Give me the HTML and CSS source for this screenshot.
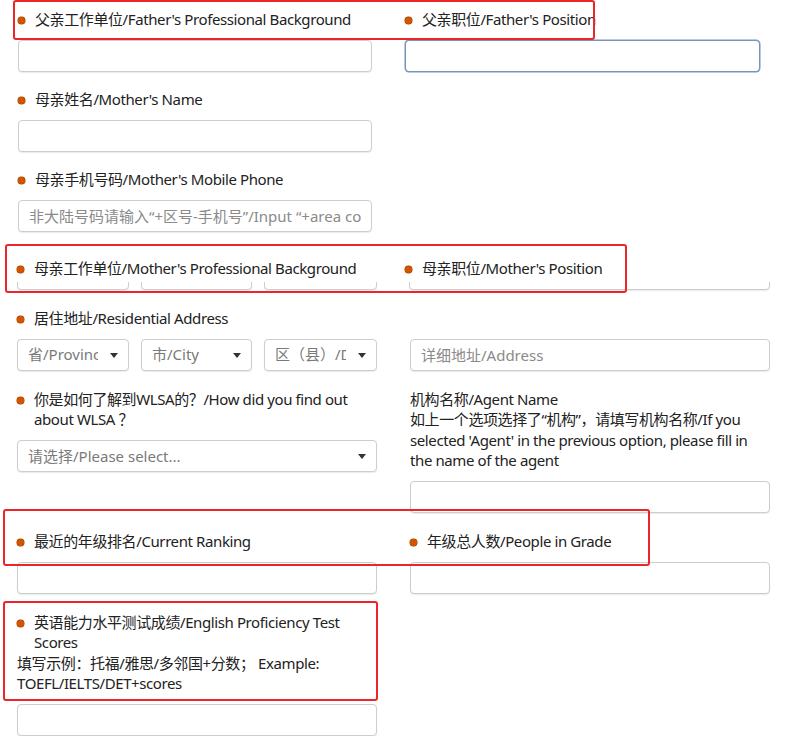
FILE: index.html
```html
<!DOCTYPE html>
<html lang="zh-CN">
<head>
    <meta charset="UTF-8">
    <meta name="viewport" content="width=device-width, initial-scale=1.0">
    <title>家庭信息 / Family Information</title>
    <link rel="stylesheet" href="styles.css">
</head>
<body>

    <form class="apply-form">

        <!-- Pais: trabalho, nome e telefone -->
        <div class="section upper">
            <div class="row">
                <span class="callout callout-father"></span>
                <div class="field">
                    <label class="req">父亲工作单位/Father's Professional Background</label>
                    <input type="text" class="text">
                </div>
                <div class="field">
                    <label class="req">父亲职位/Father's Position</label>
                    <input type="text" class="text focused">
                </div>
            </div>
            <div class="row">
                <div class="field">
                    <label class="req">母亲姓名/Mother's Name</label>
                    <input type="text" class="text">
                </div>
            </div>
            <div class="row">
                <div class="field">
                    <label class="req">母亲手机号码/Mother's Mobile Phone</label>
                    <input type="text" class="text" placeholder="非大陆号码请输入“+区号-手机号”/Input “+area code-mobile number”">
                </div>
            </div>
        </div>

        <!-- Linha colada por cima dos campos -->
        <div class="pasted">
            <span class="callout callout-mother"></span>
            <div class="strip">
                <label class="req">母亲工作单位/Mother's Professional Background</label>
                <label class="req">母亲职位/Mother's Position</label>
            </div>
            <div class="strip-fields">
                <div class="selects">
                    <span class="box"></span>
                    <span class="box"></span>
                    <span class="box"></span>
                </div>
                <span class="box"></span>
            </div>
        </div>

        <div class="section lower">
            <div class="row">
                <div class="field">
                    <label class="req">居住地址/Residential Address</label>
                    <div class="selects">
                        <div class="select"><select><option>省/Province</option></select></div>
                        <div class="select"><select><option>市/City</option></select></div>
                        <div class="select"><select><option>区（县）/District</option></select></div>
                    </div>
                </div>
                <div class="field bare">
                    <input type="text" class="text" placeholder="详细地址/Address">
                </div>
            </div>
            <div class="row">
                <div class="field">
                    <label class="req">你是如何了解到WLSA的？/How did you find out about WLSA ？</label>
                    <div class="select"><select><option>请选择/Please select...</option></select></div>
                </div>
                <div class="field">
                    <label>机构名称/Agent Name</label>
                    <p class="hint">如上一个选项选择了“机构”，请填写机构名称/If you selected 'Agent' in the previous option, please fill in the name of the agent</p>
                    <input type="text" class="text">
                </div>
            </div>
            <div class="row">
                <span class="callout callout-ranking"></span>
                <div class="field">
                    <label class="req">最近的年级排名/Current Ranking</label>
                    <input type="text" class="text">
                </div>
                <div class="field">
                    <label class="req">年级总人数/People in Grade</label>
                    <input type="text" class="text">
                </div>
            </div>
            <div class="row">
                <span class="callout callout-english"></span>
                <div class="field">
                    <label class="req">英语能力水平测试成绩/English Proficiency Test Scores</label>
                    <p class="hint">填写示例：托福/雅思/多邻国+分数； Example: TOEFL/IELTS/DET+scores</p>
                    <input type="text" class="text">
                </div>
            </div>
        </div>

    </form>

</body>
</html>
```

FILE: styles.css
```css
body {
    margin: 0;
    background-color: #fff;
    color: #222;
    font-family: "Noto Sans", "Noto Sans CJK SC", sans-serif;
    font-size: 15px;
    line-height: 20.5px;
    letter-spacing: -0.4px;
}
.apply-form {
    padding-top: 8.5px;
}
.section {
    display: flex;
    flex-direction: column;
    gap: 17px;
}
.row {
    position: relative;
    display: grid;
    column-gap: 33px;
    align-items: start;
}
.upper {
    padding-left: 18px;
}
.upper .row {
    grid-template-columns: 354px 355px;
}
.lower {
    padding-left: 17px;
    margin-top: 18px;
    gap: 18px;
}
.lower .row {
    grid-template-columns: 360px 360px;
}
.field {
    display: flex;
    flex-direction: column;
}
.field.bare {
    padding-top: 31px;
}
label {
    display: block;
    margin-bottom: 10.5px;
}
.hint {
    margin: -10.5px 0 10px;
}

/* Bolinha laranja dos campos obrigatórios */
.req {
    padding-left: 17px;
    text-indent: -17px;
}
.req::before {
    content: "";
    display: inline-block;
    width: 7px;
    height: 7px;
    margin-right: 10px;
    border-radius: 50%;
    background-color: #d45500;
    box-shadow: 0 0 0 0.5px #9a3d00;
    vertical-align: 1px;
}

.text, .box, .select select {
    box-sizing: border-box;
    height: 32px;
    border: 1px solid #cdcdcd;
    border-radius: 4px;
    background-color: #fff;
    box-shadow: 0 1px 1px rgba(0, 0, 0, 0.08);
}
.text {
    width: 100%;
    padding: 0 10px;
    font: inherit;
    color: #222;
}
.text::placeholder {
    color: #8a8a8a;
}
.text.focused {
    border-color: #7894ba;
    box-shadow: 0 0 0 0.5px #7894ba;
}

.selects {
    display: grid;
    grid-template-columns: 112px 111px 113px;
    column-gap: 12px;
}
.select {
    position: relative;
}
.select select {
    appearance: none;
    width: 100%;
    padding: 0 30px 0 10px;
    font: inherit;
    color: #7a7a7a;
}
.select::after {
    content: "";
    position: absolute;
    right: 11px;
    top: 14px;
    border-left: 4px solid transparent;
    border-right: 4px solid transparent;
    border-top: 5px solid #333;
    pointer-events: none;
}

/* Faixa branca colada por cima da linha da mãe */
.pasted {
    position: relative;
    margin-top: 12px;
}
.strip {
    position: relative;
    z-index: 1;
    height: 38px;
    box-sizing: border-box;
    padding: 14px 0 0 17px;
    display: grid;
    grid-template-columns: 355px 355px;
    column-gap: 33px;
    background-color: #fff;
}
.strip label {
    margin: 0;
}
.strip-fields {
    margin-top: -24px;
    padding-left: 17px;
    display: grid;
    grid-template-columns: 360px 361px;
    column-gap: 32px;
}
.box {
    display: block;
}

/* Molduras vermelhas de destaque */
.callout {
    position: absolute;
    z-index: 2;
    box-sizing: border-box;
    border: 2px solid #ec2528;
    border-radius: 3px;
    pointer-events: none;
}
.callout-father { left: -5px; top: -8.5px; width: 582px; height: 40px; }
.callout-mother { left: 5px; top: 0; width: 622px; height: 49px; }
.callout-ranking { left: -14px; top: -22px; width: 647px; height: 57px; }
.callout-english { left: -14px; top: -11px; width: 375px; height: 100px; }
```
